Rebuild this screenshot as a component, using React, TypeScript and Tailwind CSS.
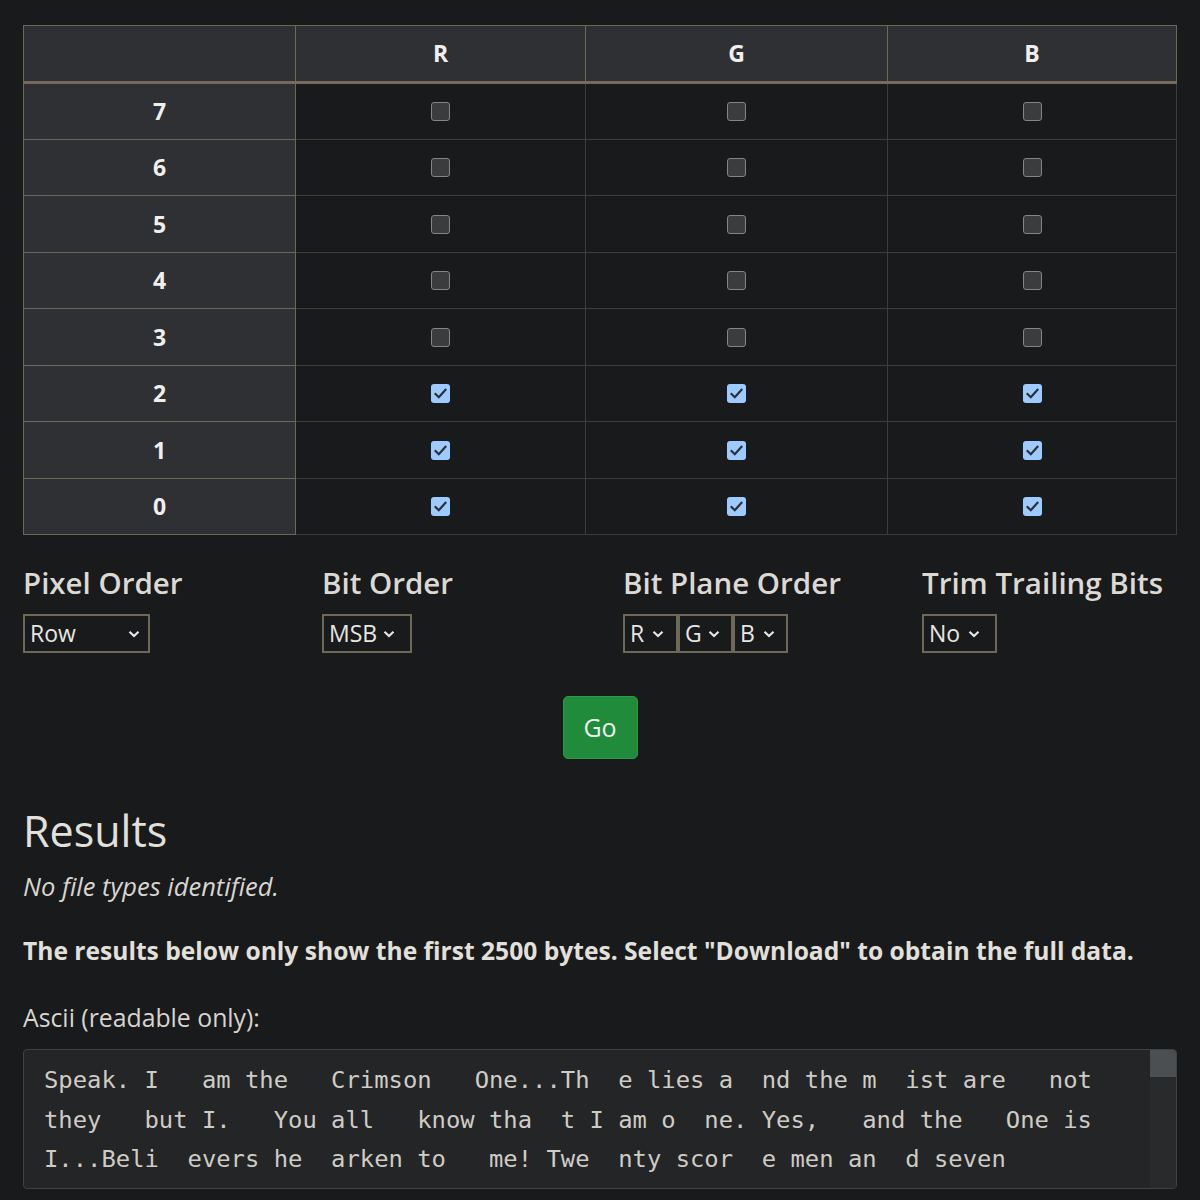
import React from "react";

const rows = [7, 6, 5, 4, 3, 2, 1, 0];

function Box({ checked }: { checked: boolean }) {
  if (checked) {
    return (
      <span className="inline-flex h-[19px] w-[19px] items-center justify-center rounded-[3px] bg-[#9ecbff]">
        <svg width="13" height="11" viewBox="0 0 13 11">
          <path d="M1.5 6 L4.8 9.2 L11.5 1.8" fill="none" stroke="#2b2e33" strokeWidth="2.2" strokeLinecap="square" />
        </svg>
      </span>
    );
  }
  return <span className="inline-block h-[19px] w-[19px] rounded-[3px] border border-[#858585] bg-[#3b3c3d]" />;
}

function Chevron() {
  return (
    <svg width="12" height="8" viewBox="0 0 12 8" className="shrink-0">
      <path d="M1.5 1.8 L6 6 L10.5 1.8" fill="none" stroke="#e8e6e3" strokeWidth="2.2" />
    </svg>
  );
}

function Sel({ label, w, gap }: { label: string; w: string; gap: string }) {
  return (
    <div className={`flex h-[39px] items-center border-2 border-[#6e6857] bg-[#181a1b] pl-[5px] ${w}`}>
      <span className="text-[23px] leading-none text-[#e8e6e3]">{label}</span>
      <span className={gap} />
      <Chevron />
    </div>
  );
}

const lines = [
  "Speak. I   am the   Crimson   One...Th  e lies a  nd the m  ist are   not",
  "they   but I.   You all   know tha  t I am o  ne. Yes,   and the   One is",
  "I...Beli  evers he  arken to   me! Twe  nty scor  e men an  d seven",
  "years ag  o we wer  e in the   mist an  d the li  es of al  l of the",
];

export default function App() {
  return (
    <div className="min-h-[1200px] bg-[#181a1b] font-['Open_Sans',sans-serif] text-[#e8e6e3]">
      <div className="px-[23px] pt-[25px]">
        <table className="w-[1153px] table-fixed border-collapse">
          <colgroup>
            <col className="w-[272px]" />
            <col className="w-[290px]" />
            <col className="w-[302px]" />
            <col className="w-[289px]" />
          </colgroup>
          <thead>
            <tr className="h-[57px] bg-[#2e3033]">
              <th className="border border-b-[3px] border-[#6e6857] border-b-[#746a5e]" />
              {["R", "G", "B"].map((c) => (
                <th key={c} className="border border-b-[3px] border-[#6e6857] border-b-[#746a5e] text-center text-[23px] font-bold text-[#f0efed]">
                  {c}
                </th>
              ))}
            </tr>
          </thead>
          <tbody>
            {rows.map((r) => (
              <tr key={r} className="h-[56.5px]">
                <th className="border border-[#6e6857] bg-[#2e3033] text-center text-[23px] font-bold text-[#f0efed]">{r}</th>
                {[0, 1, 2].map((c) => (
                  <td key={c} className="border border-[#3b3e41] text-center align-middle">
                    <div className="flex items-center justify-center pt-[1px]">
                      <Box checked={r <= 2} />
                    </div>
                  </td>
                ))}
              </tr>
            ))}
          </tbody>
        </table>
      </div>

      <div className="mt-[28px] grid grid-cols-4">
        <div className="pl-[23px]">
          <div className="text-[29.5px] font-semibold leading-[40px] text-[#dcd9d4]">Pixel Order</div>
          <div className="mt-[11px]">
            <Sel label="Row" w="w-[127px]" gap="w-[52px]" />
          </div>
        </div>
        <div className="pl-[22px]">
          <div className="text-[29.5px] font-semibold leading-[40px] text-[#dcd9d4]">Bit Order</div>
          <div className="mt-[11px]">
            <Sel label="MSB" w="w-[90px]" gap="w-[6px]" />
          </div>
        </div>
        <div className="pl-[23px]">
          <div className="text-[29.5px] font-semibold leading-[40px] text-[#dcd9d4]">Bit Plane Order</div>
          <div className="mt-[11px] flex">
            <Sel label="R" w="w-[55px]" gap="w-[8px]" />
            <Sel label="G" w="w-[55px]" gap="w-[6px]" />
            <Sel label="B" w="w-[55px]" gap="w-[8px]" />
          </div>
        </div>
        <div className="pl-[22px]">
          <div className="text-[29.5px] font-semibold leading-[40px] text-[#dcd9d4]">Trim Trailing Bits</div>
          <div className="mt-[11px]">
            <Sel label="No" w="w-[75px]" gap="w-[8px]" />
          </div>
        </div>
      </div>

      <div className="mt-[43px] flex justify-center">
        <button className="flex h-[63px] w-[75px] items-center justify-center rounded-[5px] border border-[#2a9a48] bg-[#1f8b3b] text-[25px] text-[#eaf3ec]">
          Go
        </button>
      </div>

      <div className="px-[23px]">
        <h2 className="mt-[44px] text-[43px] font-medium leading-[56px] text-[#e3e0dc]">Results</h2>
        <p className="mt-[11px] text-[25.5px] italic leading-[32px] text-[#d8d5d0]">No file types identified.</p>
        <p className="mt-[33px] text-[24.6px] font-bold leading-[32px] text-[#e3e0dc]">
          The results below only show the first 2500 bytes. Select "Download" to obtain the full data.
        </p>
        <p className="mt-[34px] text-[24.8px] leading-[32px] text-[#d8d5d0]">Ascii (readable only):</p>

        <div className="relative mt-[16px] h-[140px] overflow-hidden rounded-[4px] border border-[#3e4245] bg-[#232527]">
          <pre className="px-[20px] pt-[11px] font-['DejaVu_Sans_Mono',monospace] text-[23.85px] leading-[39.5px] text-[#cfcbc5]">
            {lines.join("\n")}
          </pre>
          <div className="absolute right-0 top-0 h-full w-[26px] bg-[#282a2c]">
            <div className="h-[27px] w-full bg-[#4b4f52]" />
          </div>
        </div>
      </div>
    </div>
  );
}
